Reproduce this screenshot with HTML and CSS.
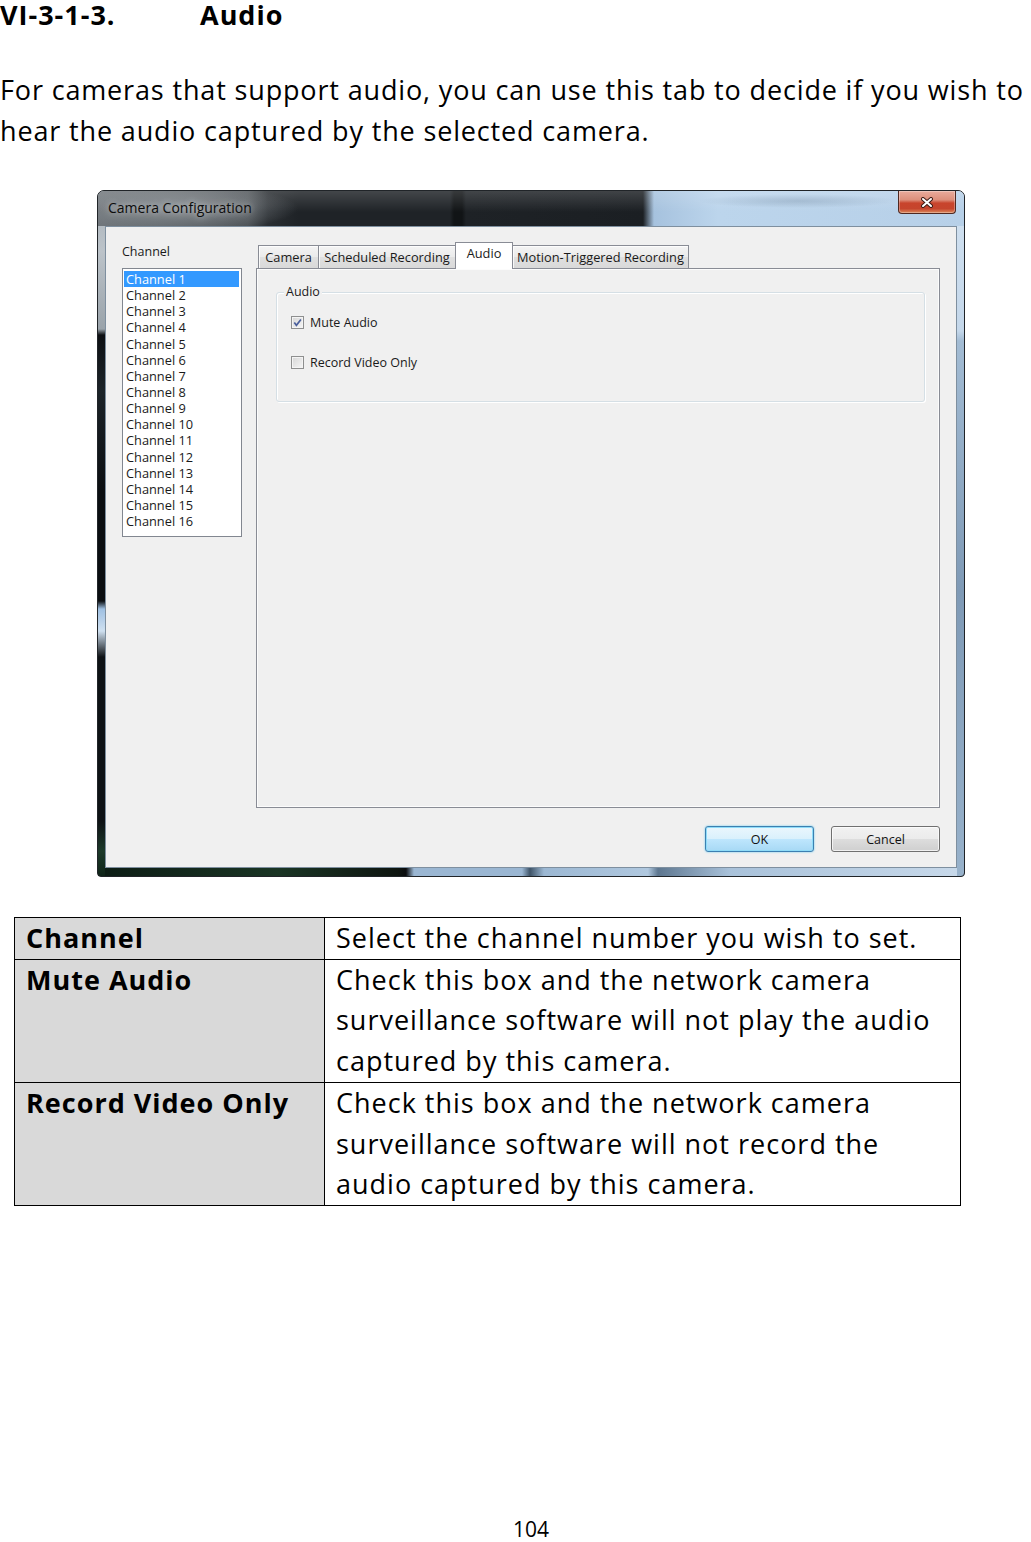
FILE: index.html
```html
<!DOCTYPE html>
<html lang="en">
<head>
    <meta charset="UTF-8">
    <title>VI-3-1-3. Audio</title>
    <link rel="stylesheet" href="styles.css">
</head>
<body>
    <h1 class="section-title"><span class="section-num">VI-3-1-3.</span>Audio</h1>

    <p class="intro">For cameras that support audio, you can use this tab to decide if you wish to hear the audio captured by the selected camera.</p>

    <div class="window">
        <div class="titlebar">
            <span class="title">Camera Configuration</span>
            <span class="close-btn">
                <svg width="16" height="11" viewBox="0 0 16 11">
                    <path d="M4 2 L12 9 M12 2 L4 9" stroke="#3e1c16" stroke-width="4" stroke-linecap="round" fill="none"/>
                    <path d="M4 2 L12 9 M12 2 L4 9" stroke="#fff" stroke-width="2" stroke-linecap="round" fill="none"/>
                </svg>
            </span>
        </div>

        <div class="client">
            <div class="main">
                <div class="channel-col">
                    <div class="field-label">Channel</div>
                    <ul class="listbox">
                        <li class="selected">Channel 1</li>
                        <li>Channel 2</li>
                        <li>Channel 3</li>
                        <li>Channel 4</li>
                        <li>Channel 5</li>
                        <li>Channel 6</li>
                        <li>Channel 7</li>
                        <li>Channel 8</li>
                        <li>Channel 9</li>
                        <li>Channel 10</li>
                        <li>Channel 11</li>
                        <li>Channel 12</li>
                        <li>Channel 13</li>
                        <li>Channel 14</li>
                        <li>Channel 15</li>
                        <li>Channel 16</li>
                    </ul>
                </div>

                <div class="tabs-col">
                    <div class="tab-strip">
                        <span class="tab tab-camera">Camera</span>
                        <span class="tab tab-schedule">Scheduled Recording</span>
                        <span class="tab tab-audio active">Audio</span>
                        <span class="tab tab-motion">Motion-Triggered Recording</span>
                    </div>
                    <div class="tab-panel">
                        <div class="group">
                            <div class="group-title">Audio</div>
                            <label class="check-row">
                                <span class="checkbox">
                                    <svg width="11" height="11" viewBox="0 0 11 11">
                                        <path d="M2.3 5.6 L4.4 8.3 L8.9 2.4" stroke="#4a5f9c" stroke-width="1.7" fill="none"/>
                                    </svg>
                                </span>
                                Mute Audio
                            </label>
                            <label class="check-row second">
                                <span class="checkbox"></span>
                                Record Video Only
                            </label>
                        </div>
                    </div>
                </div>
            </div>

            <div class="buttons">
                <button class="btn btn-default">OK</button>
                <button class="btn">Cancel</button>
            </div>
        </div>
    </div>

    <table class="info-table">
        <colgroup>
            <col class="col-term">
            <col>
        </colgroup>
        <tr>
            <th>Channel</th>
            <td>Select the channel number you wish to set.</td>
        </tr>
        <tr>
            <th>Mute Audio</th>
            <td>Check this box and the network camera surveillance software will not play the audio captured by this camera.</td>
        </tr>
        <tr>
            <th>Record Video Only</th>
            <td>Check this box and the network camera surveillance software will not record the audio captured by this camera.</td>
        </tr>
    </table>

    <div class="page-num">104</div>
</body>
</html>
```

FILE: styles.css
```css
body {
    margin: 0;
    font-family: "Open Sans", "Noto Sans", sans-serif;
    color: #000;
    background: #fff;
}

.section-title {
    display: flex;
    margin: 0;
    font-size: 27px;
    font-weight: 700;
    line-height: 30px;
    letter-spacing: 1px;
}

.section-num {
    width: 200px;
}

.intro {
    margin: 39px 0 0;
    font-size: 27px;
    line-height: 41px;
    letter-spacing: 0.85px;
}

/* Dialog window (Windows 7 style) */
.window {
    display: flex;
    flex-direction: column;
    width: 868px;
    height: 687px;
    margin: 39px 0 0 97px;
    box-sizing: border-box;
    border: 1px solid #202428;
    border-radius: 7px 7px 4px 4px;
    overflow: hidden;
    font-size: 12.5px;
    color: #1a1a1a;
    background:
        linear-gradient(to bottom, #a8b1b8 0, #bcc3c9 60px, #9aa3aa 138px, #0d1013 144px, #1c2328 200px, #0b0e11 300px, #0b0e11 410px, #9fc0e2 418px, #cfe0f0 440px, #0e1215 466px, #0e1215 630px, #1d3a2a 660px, #0f2418 100%) 0 0 / 7px 100% no-repeat,
        linear-gradient(to bottom, #d2e2f1 0, #c4d7ea 140px, #a3bcd4 150px, #7f9ab6 400px, #98b2cb 100%) 100% 0 / 7px 100% no-repeat,
        linear-gradient(to right, #0c1c14 0, #1a3524 180px, #0e1510 300px, #0a0c0e 308px, #9ab6d2 316px, #9ab6d2 424px, #3f5468 432px, #9cb8d3 446px, #b0c8df 550px, #5e7790 560px, #a9c2da 632px, #c8d9ea 100%) 0 100% / 100% 8px no-repeat,
        #1a1f24;
}

.titlebar {
    display: flex;
    align-items: flex-start;
    height: 35px;
    flex-shrink: 0;
    background:
        linear-gradient(to bottom, rgba(255, 255, 255, 0.16), rgba(255, 255, 255, 0) 60%),
        radial-gradient(ellipse 100px 7px at 700px 10px, rgba(120, 145, 170, 0.45), rgba(120, 145, 170, 0)),
        radial-gradient(ellipse 120px 24px at 80px 17px, rgba(140, 146, 151, 0.9), rgba(140, 146, 151, 0)),
        linear-gradient(to right, #6f757a 0, #4b5054 150px, #2a2e32 170px, #1f2327 200px, #1f2327 352px, #111416 356px, #111416 364px, #1e2226 368px, #1b1f23 545px, #a6c2de 556px, #bcd5ec 620px, #b7d0e8 100%);
}

.title {
    margin: 7px 0 0 10px;
    font-size: 14px;
    line-height: 20px;
    color: #0c0c0c;
    text-shadow: 0 0 6px rgba(255, 255, 255, 0.55), 0 0 12px rgba(255, 255, 255, 0.35);
}

.close-btn {
    display: flex;
    align-items: center;
    justify-content: center;
    width: 58px;
    height: 23px;
    margin: 0 8px 0 auto;
    box-sizing: border-box;
    border: 1px solid #4f2820;
    border-top: none;
    border-radius: 0 0 4px 4px;
    background: linear-gradient(to bottom, #e9ab9c 0, #dd8f7b 40%, #c8442c 55%, #c5452d 80%, #dc8a5c 100%);
    box-shadow: inset 0 0 0 1px rgba(255, 255, 255, 0.3);
}

.client {
    display: flex;
    flex-direction: column;
    flex: 1;
    margin: 0 7px 8px;
    padding: 15px 16px;
    box-sizing: border-box;
    border: 1px solid #7e8f9f;
    background: #f0f0f0;
}

.main {
    display: flex;
    gap: 14px;
}

.channel-col {
    width: 120px;
}

.field-label {
    height: 26px;
    padding-top: 1px;
    box-sizing: border-box;
    line-height: 18px;
}

.listbox {
    list-style: none;
    height: 269px;
    margin: 0;
    padding: 2px 2px 0 1px;
    box-sizing: border-box;
    border: 1px solid #828790;
    background: #fff;
    font-size: 12.8px;
}

.listbox li {
    height: 16.15px;
    padding-left: 2px;
    line-height: 16px;
    white-space: nowrap;
}

.listbox li.selected {
    background: #3399ff;
    color: #fff;
}

.tabs-col {
    width: 684px;
}

.tab-strip {
    display: flex;
    align-items: flex-end;
    height: 26px;
    padding-left: 2px;
    position: relative;
    z-index: 1;
}

.tab {
    height: 23px;
    margin-right: -1px;
    padding-top: 1px;
    box-sizing: border-box;
    border: 1px solid #898c95;
    border-bottom: none;
    font-size: 12.8px;
    line-height: 20px;
    text-align: center;
    white-space: nowrap;
    background: linear-gradient(to bottom, #f4f4f4 0, #ebebeb 50%, #e0e0e0 51%, #d9d9d9 100%);
    box-shadow: inset 1px 1px 0 rgba(255, 255, 255, 0.8);
}

.tab-camera {
    width: 61px;
}

.tab-schedule {
    width: 138px;
}

.tab-audio {
    width: 58px;
}

.tab-motion {
    width: 177px;
}

.tab.active {
    height: 27px;
    margin-bottom: -1px;
    padding: 0 0 4px;
    background: #fff;
    box-shadow: none;
}

.tab-panel {
    height: 540px;
    box-sizing: border-box;
    border: 1px solid #898c95;
    background: #f0f0f0;
    box-shadow: inset 0 0 0 1px #fcfcfc;
    overflow: hidden;
}

.group {
    height: 110px;
    margin: 23px 14px 0 19px;
    box-sizing: border-box;
    border: 1px solid #d5dfe5;
    border-radius: 3px;
    box-shadow: inset 1px 1px 0 #fff, 1px 1px 0 #fff;
}

.group-title {
    width: fit-content;
    margin: -9px 0 0 7px;
    padding: 0 2px;
    line-height: 16px;
    background: #f0f0f0;
}

.check-row {
    display: flex;
    align-items: center;
    gap: 6px;
    height: 20px;
    margin: 12px 0 0 14px;
}

.check-row.second {
    margin-top: 20px;
}

.checkbox {
    display: flex;
    width: 13px;
    height: 13px;
    box-sizing: border-box;
    border: 1px solid #8e8f8f;
    background: linear-gradient(135deg, #d6d6d6 0, #f6f6f6 100%);
    box-shadow: inset 0 0 0 1px #f4f4f4;
}

.buttons {
    display: flex;
    justify-content: flex-end;
    gap: 17px;
    margin-top: 18px;
}

.btn {
    width: 109px;
    height: 26px;
    padding: 0;
    border: 1px solid #707070;
    border-radius: 3px;
    font: inherit;
    color: #111;
    background: linear-gradient(to bottom, #f2f2f2 0, #ebebeb 50%, #dddddd 51%, #cfcfcf 100%);
    box-shadow: inset 0 0 0 1px rgba(255, 255, 255, 0.7);
}

.btn-default {
    border-color: #3c7fb1;
    background: linear-gradient(to bottom, #eaf6fd 0, #d9f0fc 50%, #bee6fd 51%, #a7d9f5 100%);
    box-shadow: inset 0 0 0 1px #8fdcf8, 0 0 2px #5ac8f0;
}

/* Description table */
.info-table {
    width: 947px;
    margin: 40px 0 0 14px;
    border-collapse: collapse;
    font-size: 27px;
    line-height: 40.7px;
    letter-spacing: 1px;
}

.col-term {
    width: 310px;
}

.info-table th,
.info-table td {
    padding: 0 11px;
    border: 1px solid #000;
    text-align: left;
    vertical-align: top;
}

.info-table th {
    font-weight: 700;
    background: #d9d9d9;
}

.page-num {
    margin-top: 315px;
    padding-left: 31px;
    font-size: 21px;
    line-height: 16px;
    text-align: center;
}
```
